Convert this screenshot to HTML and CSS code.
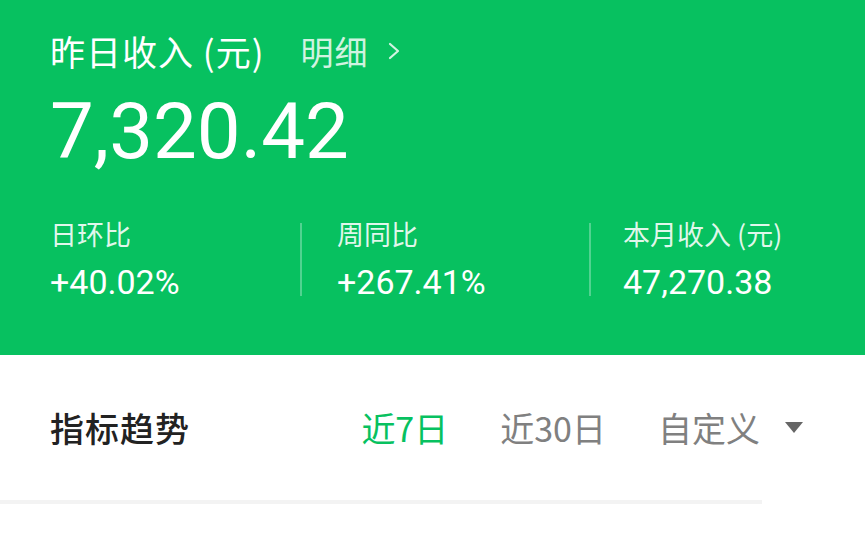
FILE: index.html
```html
<!DOCTYPE html>
<html lang="zh-CN">

<head>
  <meta charset="UTF-8" />
  <meta name="viewport" content="width=device-width, initial-scale=1" />
  <title>收入概览</title>
  <link rel="stylesheet" href="styles.css">
</head>

<body>

  <div class="summary">
    <div class="title">
      <span>昨日收入 (元)</span>
      <a class="detail" href="#">明细
        <svg class="chevron" width="14" height="20" viewBox="0 0 14 20">
          <polyline points="3,3 11,10 3,17" fill="none" stroke="currentColor" stroke-width="2.2" stroke-linecap="round" stroke-linejoin="round" />
        </svg>
      </a>
    </div>
    <div class="amount">7,320.42</div>

    <div class="stats">
      <div class="stat first">
        <div class="label">日环比</div>
        <div class="value">+40.02%</div>
      </div>
      <div class="divider"></div>
      <div class="stat">
        <div class="label">周同比</div>
        <div class="value">+267.41%</div>
      </div>
      <div class="divider"></div>
      <div class="stat last">
        <div class="label">本月收入 (元)</div>
        <div class="value">47,270.38</div>
      </div>
    </div>
  </div>

  <div class="trend">
    <div class="trend-head">
      <h2>指标趋势</h2>
      <div class="tabs">
        <span class="tab active">近7日</span>
        <span class="tab">近30日</span>
        <span class="tab picker">自定义 <i class="caret"></i></span>
      </div>
    </div>
    <div class="band"></div>
  </div>

</body>

</html>
```

FILE: styles.css
```css
/* Basic reset */
body {
  margin: 0;
  background: #fff;
  font-family: "Noto Sans CJK SC", "Noto Sans", sans-serif;
  overflow: hidden;
}

/* Green summary card */
.summary {
  background: #07c160;
  color: #fff;
  height: 355px;
  box-sizing: border-box;
  padding: 28px 0 0 50px;
}

.title {
  display: flex;
  align-items: center;
  font-size: 35px;
  line-height: 46px;
  letter-spacing: 1px;
}

.detail {
  display: flex;
  align-items: center;
  margin-left: 36px;
  color: rgba(255, 255, 255, 0.82);
  text-decoration: none;
  font-size: 33px;
}

.chevron {
  margin-left: 18px;
}

.amount {
  margin-top: 18px;
  font-family: Roboto, "Liberation Sans", sans-serif;
  font-size: 78px;
  line-height: 80px;
}

/* Three figures under the amount */
.stats {
  display: flex;
  align-items: center;
  margin-top: 44px;
}

.stat {
  flex-shrink: 0;
  width: 252px;
  padding-left: 35px;
}

.stat.first {
  width: 250px;
  padding-left: 0;
}

.stat.last {
  padding-left: 32px;
}

.divider {
  flex-shrink: 0;
  width: 2px;
  height: 73px;
  background: rgba(255, 255, 255, 0.3);
}

.label {
  font-size: 27px;
  line-height: 36px;
  color: rgba(255, 255, 255, 0.88);
}

.value {
  margin-top: 10px;
  font-family: Roboto, "Liberation Sans", sans-serif;
  font-size: 34px;
  line-height: 40px;
  white-space: nowrap;
}

/* Trend section */
.trend-head {
  display: flex;
  align-items: center;
  justify-content: space-between;
  height: 145px;
  padding: 0 62px 0 50px;
}

.trend-head h2 {
  margin: 0;
  font-size: 34px;
  font-weight: 500;
  letter-spacing: 1px;
  color: #222;
}

.tabs {
  display: flex;
  align-items: center;
  gap: 52px;
}

.tab {
  font-size: 34px;
  color: #808080;
}

.tab.active {
  color: #07c160;
}

.picker {
  display: flex;
  align-items: center;
}

.caret {
  margin-left: 25px;
  width: 0;
  height: 0;
  border-left: 9px solid transparent;
  border-right: 9px solid transparent;
  border-top: 11px solid #666;
}

.band {
  width: 762px;
  height: 4px;
  background: #f3f3f3;
}
```
